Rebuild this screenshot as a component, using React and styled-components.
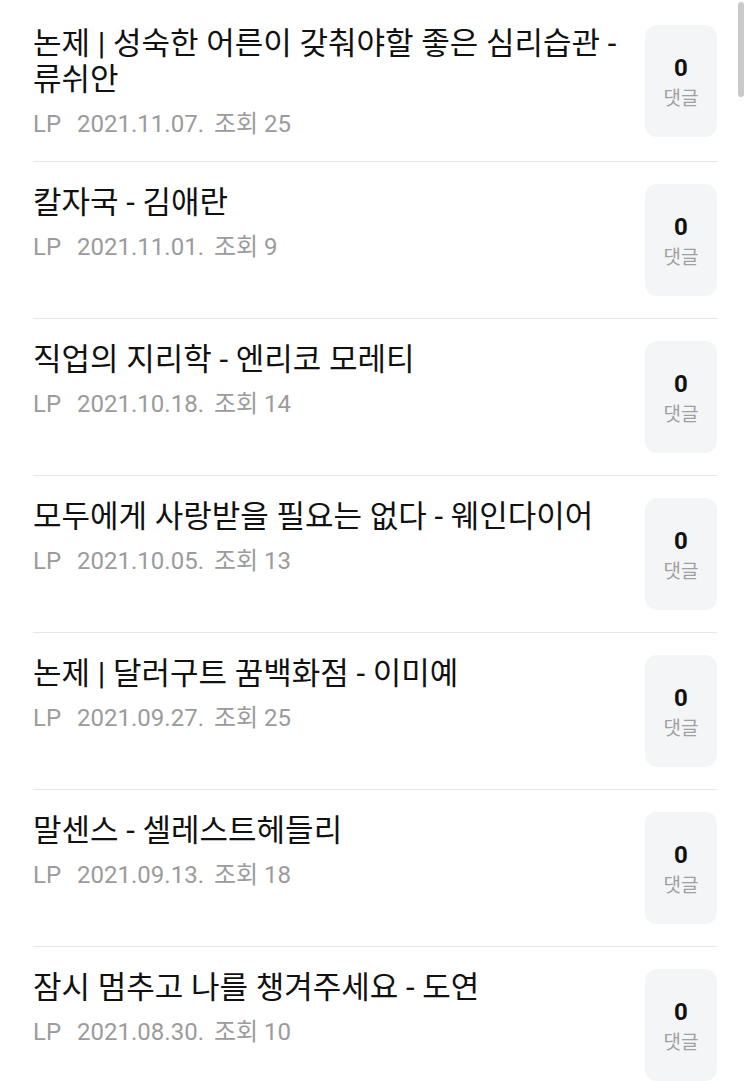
import React from 'react';
import styled, { createGlobalStyle } from 'styled-components';

const GlobalStyle = createGlobalStyle`
  html {
    scrollbar-width: none;
  }
  html::-webkit-scrollbar {
    display: none;
  }
  body {
    margin: 0;
    background: #ffffff;
    font-family: Roboto, "Noto Sans CJK KR", sans-serif;
    -webkit-font-smoothing: antialiased;
  }
`;

const List = styled.ul`
  list-style: none;
  margin: 0;
  padding: 3px 33px 0;
`;

const Row = styled.li`
  display: flex;
  align-items: flex-start;
  justify-content: space-between;
  gap: 20px;
  padding: 22px 0;
  border-bottom: 1px solid #e8e8e8;
`;

const Info = styled.div`
  flex: 1;
  min-width: 0;
  margin-top: 1px;
`;

const Title = styled.div`
  font-size: 31px;
  line-height: 36px;
  color: #111111;
  word-break: keep-all;
`;

const Meta = styled.div`
  display: flex;
  margin-top: 11px;
  font-size: 24px;
  line-height: 30px;
  color: #9b9b9b;

  & > .author {
    margin-right: 16px;
  }

  & > .date {
    margin-right: 10px;
  }
`;

const CommentBox = styled.div`
  flex: none;
  width: 72px;
  height: 112px;
  box-sizing: border-box;
  padding-top: 3px;
  border-radius: 12px;
  background: #f4f5f7;
  display: flex;
  flex-direction: column;
  align-items: center;
  justify-content: center;
  gap: 4px;
`;

const Count = styled.span`
  font-size: 24px;
  line-height: 28px;
  font-weight: 700;
  color: #111111;
`;

const CountLabel = styled.span`
  font-size: 19px;
  line-height: 26px;
  color: #a0a0a0;
`;

const ScrollThumb = styled.div`
  position: fixed;
  top: 2px;
  right: 6px;
  width: 6px;
  height: 95px;
  border-radius: 3px;
  background: #c9c9c9;
`;

const posts = [
  { title: '논제 | 성숙한 어른이 갖춰야할 좋은 심리습관 - 류쉬안', date: '2021.11.07.', views: 25 },
  { title: '칼자국 - 김애란', date: '2021.11.01.', views: 9 },
  { title: '직업의 지리학 - 엔리코 모레티', date: '2021.10.18.', views: 14 },
  { title: '모두에게 사랑받을 필요는 없다 - 웨인다이어', date: '2021.10.05.', views: 13 },
  { title: '논제 | 달러구트 꿈백화점 - 이미예', date: '2021.09.27.', views: 25 },
  { title: '말센스 - 셀레스트헤들리', date: '2021.09.13.', views: 18 },
  { title: '잠시 멈추고 나를 챙겨주세요 - 도연', date: '2021.08.30.', views: 10 },
];

export default function App() {
  return (
    <>
      <GlobalStyle />
      <List>
        {posts.map((post, idx) => (
          <Row key={idx}>
            <Info>
              <Title>{post.title}</Title>
              <Meta>
                <span className='author'>LP</span>
                <span className='date'>{post.date}</span>
                <span>조회 {post.views}</span>
              </Meta>
            </Info>
            <CommentBox>
              <Count>0</Count>
              <CountLabel>댓글</CountLabel>
            </CommentBox>
          </Row>
        ))}
      </List>
      <ScrollThumb />
    </>
  );
}
